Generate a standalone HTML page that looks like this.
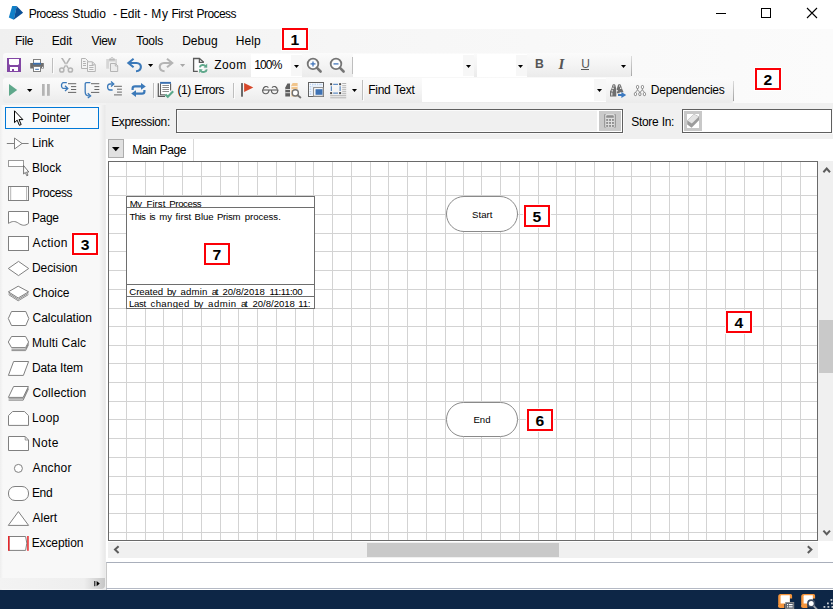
<!DOCTYPE html>
<html><head><meta charset="utf-8"><title>Process Studio - Edit - My First Process</title>
<style>
html,body{margin:0;padding:0;}
body{width:833px;height:609px;position:relative;overflow:hidden;background:#f0f0f0;font-family:"Liberation Sans",sans-serif;}
.a{position:absolute;box-sizing:border-box;}
.t{position:absolute;white-space:pre;line-height:1;}
svg{position:absolute;overflow:visible;}
.lab{position:absolute;box-sizing:border-box;border:2px solid #fb0007;background:#fff;font-weight:bold;color:#000;box-shadow:0 0 0 1px rgba(255,255,255,.85);}
</style></head><body>

<div class="a" style="left:0;top:0;width:833px;height:29px;background:#fff"></div>
<svg style="left:7px;top:5px" width="17" height="16" viewBox="0 0 17 16">
<polygon points="5.2,1 9.8,1.1 6.8,14.7 1.8,12.5" fill="#0f7fc8"/>
<polygon points="9.7,1.1 16.1,7.8 6.7,14.7" fill="#0b4f96"/>
</svg>
<span><span class="t" style="left:28.84px;top:8.00px;font-size:12px;letter-spacing:-0.612px;">Process</span> <span class="t" style="left:72.26px;top:8.00px;font-size:12px;letter-spacing:-0.080px;">Studio</span> <span class="t" style="left:112.99px;top:8.00px;font-size:12px;letter-spacing:0.000px;">-</span> <span class="t" style="left:119.94px;top:8.00px;font-size:12px;letter-spacing:-0.117px;">Edit</span> <span class="t" style="left:143.39px;top:8.00px;font-size:12px;letter-spacing:0.000px;">-</span> <span class="t" style="left:151.14px;top:8.00px;font-size:12px;letter-spacing:0.870px;">My</span> <span class="t" style="left:171.44px;top:8.00px;font-size:12px;letter-spacing:-0.423px;">First</span> <span class="t" style="left:196.54px;top:8.00px;font-size:12px;letter-spacing:-0.562px;">Process</span></span>
<svg style="left:0;top:0" width="833" height="29" viewBox="0 0 833 29" shape-rendering="crispEdges">
<rect x="716" y="13" width="10" height="1" fill="#000"/>
<rect x="761.5" y="8.5" width="9" height="9" fill="none" stroke="#000" stroke-width="1"/>
</svg>
<svg style="left:0;top:0" width="833" height="29" viewBox="0 0 833 29">
<path d="M807 8 L817 18 M817 8 L807 18" stroke="#000" stroke-width="1.1" fill="none"/>
</svg>
<div class="a" style="left:0;top:29px;width:833px;height:24px;background:linear-gradient(to right,#f0f0f0 0%,#f6f6f6 40%,#fbfbfb 100%)"></div>
<span class="t" style="left:15.04px;top:35.00px;font-size:12px;letter-spacing:-0.283px;">File</span>
<span class="t" style="left:51.74px;top:35.00px;font-size:12px;letter-spacing:-0.117px;">Edit</span>
<span class="t" style="left:91.57px;top:35.00px;font-size:12px;letter-spacing:-0.367px;">View</span>
<span class="t" style="left:136.16px;top:35.00px;font-size:12px;letter-spacing:-0.240px;">Tools</span>
<span class="t" style="left:182.14px;top:35.00px;font-size:12px;letter-spacing:0.068px;">Debug</span>
<span class="t" style="left:235.74px;top:35.00px;font-size:12px;letter-spacing:0.127px;">Help</span>
<div class="a" style="left:0;top:53px;width:833px;height:52px;background:linear-gradient(to right,#f0f0f0 0%,#f6f6f6 40%,#fbfbfb 100%)"></div>
<div class="a" style="left:3px;top:53px;width:629px;height:24px;border-radius:3px 3px 3px 3px;background:linear-gradient(to bottom,#fbfbfb 0%,#f4f4f4 50%,#ebebeb 100%)"></div>
<div class="a" style="left:3px;top:78px;width:731px;height:25px;border-radius:3px 3px 3px 3px;background:linear-gradient(to bottom,#fbfbfb 0%,#f4f4f4 50%,#ebebeb 100%)"></div>
<svg style="left:7px;top:58px" width="14" height="14" viewBox="0 0 14 14"><rect x="0" y="0" width="14" height="14" fill="#8246a4"/><path d="M2 1H12V6L11 7H3L2 6Z" fill="#fff"/><rect x="3" y="9" width="8" height="4" fill="#fff"/><rect x="5" y="11" width="2" height="2" fill="#8246a4"/></svg>
<svg style="left:30px;top:59px" width="14" height="13" viewBox="0 0 14 13"><rect x="3.5" y="0.5" width="7" height="5" fill="#fff" stroke="#808080" stroke-width="1"/>
<rect x="3" y="3.8" width="8" height="1.9" fill="#3a6fb0"/>
<path d="M0.2 4H3V5.8H11V4H13.8V9.6H11V7.5H3V9.6H0.2Z" fill="#6d6d6d"/>
<rect x="3.5" y="7.5" width="7" height="5" fill="#fff" stroke="#808080" stroke-width="1"/>
<rect x="5.2" y="9.8" width="3.7" height="1" fill="#3a6fb0"/>
<rect x="12" y="7.8" width="1.1" height="1.1" fill="#fff"/></svg>
<div class="a" style="left:52px;top:58px;width:1px;height:15px;background:#bebebe"></div><div class="a" style="left:53px;top:59px;width:1px;height:15px;background:#fcfcfc"></div>
<svg style="left:59px;top:58px" width="15" height="15" viewBox="0 0 15 15"><g fill="none" stroke="#b4b4b4" stroke-width="1.5"><circle cx="2.8" cy="12" r="2.1"/><circle cx="11.4" cy="12" r="2.1"/></g>
<path d="M1.9 0H3.9L9.9 9.9L8.6 10.6Z M12.1 0H10.1L4.1 9.9L5.4 10.6Z" fill="#b4b4b4"/></svg>
<svg style="left:81px;top:58px" width="15" height="14" viewBox="0 0 15 14"><g fill="#f4f4f4" stroke="#b4b4b4" stroke-width="1"><path d="M0.5 0.5H4.5L6.9 2.9V10.5H0.5Z"/><path d="M6.5 3.8H11.5L14.3 6.6V13.5H6.5Z"/></g>
<g stroke="#b4b4b4" stroke-width="1" fill="none"><path d="M2 3.5H4.5M2 5.5H5M2 7.5H5M8.2 7.5H12.5M8.2 9.5H12.5M8.2 11.5H12.5M11.3 4V6.8H14"/></g></svg>
<svg style="left:106px;top:57px" width="13" height="15" viewBox="0 0 13 15"><rect x="0.2" y="2" width="10.8" height="9.7" fill="#d6d6d6"/><rect x="3" y="4.6" width="6.4" height="7.1" fill="#efefef"/>
<path d="M3.2 3.4V1.6H4.6C4.6 -0.2 7.4 -0.2 7.4 1.6H8.8V3.4Z" fill="#b8b8b8"/><circle cx="6" cy="1.5" r="0.7" fill="#f0f0f0"/>
<path d="M4.5 6.5H9.5L11.7 8.7V14.5H4.5Z" fill="#ececec" stroke="#b4b4b4" stroke-width="1"/><path d="M9.3 6.8V9H11.5" fill="none" stroke="#b4b4b4" stroke-width="0.9"/></svg>
<svg style="left:127px;top:58px" width="15" height="14" viewBox="0 0 15 14"><path d="M6.6 0.8 L1.4 5 L6.6 9.2" fill="none" stroke="#3b79b9" stroke-width="2.1" stroke-linejoin="miter"/><path d="M2 5 H9.6 C15.4 5 15.4 12.8 9 13.2" fill="none" stroke="#3b79b9" stroke-width="2.1"/></svg>
<svg style="left:147.8px;top:64px" width="6" height="4" viewBox="0 0 6 4"><polygon points="0,0 5.2,0 2.6,3.1" fill="#000"/></svg>
<svg style="left:159px;top:58px" width="15" height="14" viewBox="0 0 15 14"><g transform="translate(14.6,0) scale(-1,1)"><path d="M6.6 0.8 L1.4 5 L6.6 9.2" fill="none" stroke="#b4b4b4" stroke-width="2.1" stroke-linejoin="miter"/><path d="M2 5 H9.6 C15.4 5 15.4 12.8 9 13.2" fill="none" stroke="#b4b4b4" stroke-width="2.1"/></g></svg>
<svg style="left:179.8px;top:64px" width="6" height="4" viewBox="0 0 6 4"><polygon points="0,0 5.2,0 2.6,3.1" fill="#a8a8a8"/></svg>
<svg style="left:193px;top:58px" width="15" height="15" viewBox="0 0 15 15"><path d="M0.6 0.5H6.4L10.7 4.3V13.3H0.6Z" fill="#fdfdfd"/><path d="M4.8 13.3H0.6V0.5H6.4L10.7 4.3" fill="none" stroke="#5a5a5a" stroke-width="1.3"/><path d="M6.4 0.6V4.3H10.8" fill="none" stroke="#5a5a5a" stroke-width="1.3"/>
<g fill="none" stroke="#5fa88b" stroke-width="1.9"><path d="M6.8 9.4C7.2 6.6 11 6.2 12.8 8.2"/><path d="M13.8 11.4C13.4 14.2 9.6 14.8 7.8 12.8"/></g>
<path d="M14.2 5.6V9.8L10.6 9.4Z M6.2 15V11L9.8 11.4Z" fill="#5fa88b"/></svg>
<span class="t" style="left:214.34px;top:59.00px;font-size:12px;letter-spacing:0.393px;">Zoom</span>
<div class="a" style="left:251px;top:54px;width:51px;height:23px;background:#fff"></div><div class="a" style="left:291px;top:55px;width:11px;height:21px;background:#f7f7f7"></div>
<span class="t" style="left:254.20px;top:59.00px;font-size:12px;letter-spacing:-0.857px;">100%</span>
<svg style="left:293.8px;top:65px" width="6" height="4" viewBox="0 0 6 4"><polygon points="0,0 5,0 2.5,2.9" fill="#000"/></svg>
<svg style="left:307.1px;top:57.5px" width="15" height="15" viewBox="0 0 15 15"><circle cx="6" cy="5.9" r="5.3" fill="#fdfdfd" stroke="#757575" stroke-width="1.8"/><path d="M10 9.9L13.6 13.5" stroke="#757575" stroke-width="2.6" fill="none" stroke-linecap="round"/><path d="M3.5 5.9H8.5" stroke="#3a70b8" stroke-width="1.25"/><path d="M6 3.4V8.4" stroke="#3a70b8" stroke-width="1.25"/></svg>
<svg style="left:330.1px;top:57.5px" width="15" height="15" viewBox="0 0 15 15"><circle cx="6" cy="5.9" r="5.3" fill="#fdfdfd" stroke="#757575" stroke-width="1.8"/><path d="M10 9.9L13.6 13.5" stroke="#757575" stroke-width="2.6" fill="none" stroke-linecap="round"/><path d="M3.5 5.9H8.5" stroke="#3a70b8" stroke-width="1.25"/></svg>
<div class="a" style="left:352px;top:57px;width:1px;height:17px;background:#bebebe"></div><div class="a" style="left:353px;top:58px;width:1px;height:17px;background:#fcfcfc"></div>
<div class="a" style="left:353px;top:54px;width:121px;height:23px;background:#fff"></div><div class="a" style="left:463px;top:55px;width:11px;height:21px;background:#f7f7f7"></div>
<svg style="left:466px;top:64.6px" width="6" height="4" viewBox="0 0 6 4"><polygon points="0,0 5,0 2.5,2.9" fill="#000"/></svg>
<div class="a" style="left:477px;top:54px;width:50px;height:23px;background:#fff"></div><div class="a" style="left:516px;top:55px;width:11px;height:21px;background:#f7f7f7"></div>
<svg style="left:518px;top:64.6px" width="6" height="4" viewBox="0 0 6 4"><polygon points="0,0 5,0 2.5,2.9" fill="#000"/></svg>
<span class="t" style="left:535.1px;top:58px;font-size:12.2px;font-weight:bold;color:#555;">B</span>
<span class="t" style="left:558.6px;top:56.6px;font-size:15px;font-weight:bold;font-style:italic;color:#555;font-family:'Liberation Serif',serif">I</span>
<span class="t" style="left:581.2px;top:57.6px;font-size:12px;color:#555;">U</span><div class="a" style="left:581px;top:69px;width:8px;height:1px;background:#555"></div>
<svg style="left:620.8px;top:64.6px" width="6" height="4" viewBox="0 0 6 4"><polygon points="0,0 5,0 2.5,2.9" fill="#000"/></svg>
<div class="a" style="left:631px;top:56px;width:1px;height:20px;background:linear-gradient(to bottom,#dcdcdc,#a8a8a8)"></div>
<svg style="left:9px;top:84px" width="9" height="12" viewBox="0 0 9 12"><polygon points="0,0 8.2,6 0,12" fill="#5fa88b"/></svg>
<svg style="left:26.7px;top:88.9px" width="6" height="4" viewBox="0 0 6 4"><polygon points="0,0 5.4,0 2.7,3.1" fill="#000"/></svg>
<svg style="left:42px;top:84px" width="8" height="12" viewBox="0 0 8 12"><rect x="0" y="0" width="2.7" height="11.8" fill="#b4b4b4"/><rect x="5" y="0" width="2.8" height="11.8" fill="#b4b4b4"/></svg>
<svg style="left:60px;top:81px" width="17" height="13" viewBox="0 0 17 13"><rect x="8" y="2.2" width="8.2" height="1" fill="#686868"/><rect x="11" y="5.1" width="5.199999999999999" height="1" fill="#686868"/><rect x="11" y="8" width="5.199999999999999" height="1" fill="#686868"/><rect x="8" y="10.9" width="8.2" height="1" fill="#686868"/><path d="M6.8 1.6H3.6C0.8 1.6 0.8 7.4 3.6 7.4H7" fill="none" stroke="#3b79b9" stroke-width="1.3"/><path d="M5 4.8L7.8 7.4L5 10" fill="none" stroke="#3b79b9" stroke-width="1.3"/></svg>
<svg style="left:84px;top:81px" width="16" height="17" viewBox="0 0 16 17"><rect x="7" y="2.2" width="8.3" height="1" fill="#686868"/><rect x="10.4" y="5.1" width="4.9" height="1" fill="#686868"/><rect x="10.4" y="8" width="4.9" height="1" fill="#686868"/><rect x="7" y="10.9" width="8.3" height="1" fill="#686868"/><path d="M6.4 1.6H2.6C1.6 1.6 1.2 2.2 1.2 3V11C1.2 14 3 15 5.6 15" fill="none" stroke="#3b79b9" stroke-width="1.3"/><path d="M3.8 12.2L6.6 15L3.8 17" fill="none" stroke="#3b79b9" stroke-width="1.3"/></svg>
<svg style="left:106px;top:81px" width="16" height="15" viewBox="0 0 16 15"><rect x="8" y="4.8" width="7.9" height="1" fill="#686868"/><rect x="11" y="7.7" width="4.9" height="1" fill="#686868"/><rect x="11" y="10.6" width="4.9" height="1" fill="#686868"/><rect x="8" y="13.4" width="7.9" height="1" fill="#686868"/><path d="M6.6 9H4C0.8 9 0.8 3 4 3H7" fill="none" stroke="#3b79b9" stroke-width="1.3"/><path d="M5 0.4L7.8 3L5 5.6" fill="none" stroke="#3b79b9" stroke-width="1.3"/></svg>
<svg style="left:130.6px;top:82.6px" width="15" height="14" viewBox="0 0 15 14"><g fill="none" stroke="#3b79b9" stroke-width="2.2"><path d="M1.6 7V5.6C1.6 4.2 2.6 3.4 4 3.4H11.6"/><path d="M13.4 7V8.4C13.4 9.8 12.4 10.6 11 10.6H3.4"/></g>
<path d="M10 0L14.8 3.4L10 6.8Z M5 7.2L0.2 10.6L5 14Z" fill="#3b79b9"/></svg>
<div class="a" style="left:153px;top:83px;width:1px;height:15px;background:#bebebe"></div><div class="a" style="left:154px;top:84px;width:1px;height:15px;background:#fcfcfc"></div>
<svg style="left:157px;top:81px" width="18" height="17" viewBox="0 0 18 17"><path d="M1.3 2.2V15.3H8" fill="none" stroke="#5a5a5a" stroke-width="1.2"/>
<path d="M3.6 2.5V13.7H8.4M13.6 2.5V9.6" fill="none" stroke="#5a5a5a" stroke-width="1.1"/>
<rect x="4.2" y="2.8" width="8.8" height="10.3" fill="#fff"/>
<rect x="3.1" y="0.9" width="10.9" height="1.9" fill="#3a6fb0"/>
<g fill="#8c8c8c"><rect x="5.4" y="4" width="6.6" height="1"/><rect x="5.4" y="6" width="6.6" height="1"/><rect x="5.4" y="8" width="6.6" height="1"/><rect x="5.4" y="10" width="6.6" height="1"/></g>
<path d="M8.4 13.4L10.8 15.8L16.2 10.2" fill="none" stroke="#5aa88a" stroke-width="2.1"/></svg>
<span class="t" style="left:177.58px;top:84.00px;font-size:12px;letter-spacing:-0.479px;word-spacing:0.479px;">(1) Errors</span>
<div class="a" style="left:233px;top:83px;width:1px;height:15px;background:#bebebe"></div><div class="a" style="left:234px;top:84px;width:1px;height:15px;background:#fcfcfc"></div>
<svg style="left:241px;top:83px" width="13" height="14" viewBox="0 0 13 14"><rect x="0" y="0.1" width="2" height="13.6" fill="#6a6a6a"/><polygon points="3.1,0 12.3,4.4 3.1,9" fill="#d6472a"/></svg>
<svg style="left:261px;top:85px" width="18" height="10" viewBox="0 0 18 10"><g fill="none" stroke="#606060" stroke-width="1.15"><path d="M1 5H17.4"/><path d="M1.6 5C1.6 10 8 10 8 5"/><path d="M10.4 5C10.4 10 16.8 10 16.8 5"/><path d="M2 4.6C2.5 1.5 5.5 0.5 7.4 2.6"/><path d="M16.4 4.6C15.9 1.5 12.9 0.5 11 2.6"/></g></svg>
<svg style="left:285px;top:83px" width="17" height="15" viewBox="0 0 17 15"><path d="M0.3 13.6V4.4L2.4 0.6H5V13.6Z" fill="#5e5e5e"/>
<path d="M6.4 13.6V2.2L7.6 0H12.6V13.6Z" fill="#f1c58c"/>
<g fill="#fff" opacity=".75"><rect x="0.3" y="6" width="4.7" height="1"/><rect x="0.3" y="9.2" width="4.7" height="1"/><rect x="6.4" y="3" width="6.2" height="1"/><rect x="6.4" y="6" width="6.2" height="1"/></g>
<circle cx="10.3" cy="9.9" r="3.1" fill="#fff" stroke="#737373" stroke-width="1.4"/><path d="M12.6 12.2L15.4 14.4" stroke="#737373" stroke-width="1.9" stroke-linecap="round"/></svg>
<svg style="left:308px;top:82px" width="16" height="15" viewBox="0 0 16 15"><rect x="0.5" y="0.5" width="15" height="14" fill="#fff" stroke="#626262" stroke-width="1"/>
<g fill="#bcd3f0"><rect x="1.6" y="1.6" width="1.6" height="1.6"/><rect x="4" y="1.6" width="1.6" height="1.6"/><rect x="6.4" y="1.6" width="1.6" height="1.6"/><rect x="8.8" y="1.6" width="1.6" height="1.6"/><rect x="11.2" y="1.6" width="1.6" height="1.6"/><rect x="13.2" y="1.6" width="1.2" height="1.6"/>
<rect x="1.6" y="4" width="1.6" height="1.6"/><rect x="1.6" y="6.4" width="1.6" height="1.6"/><rect x="1.6" y="8.8" width="1.6" height="1.6"/><rect x="1.6" y="11.2" width="1.6" height="1.6"/>
<rect x="3.6" y="3.6" width="1" height="10" opacity=".6"/><rect x="3.6" y="3.6" width="11" height="1" opacity=".6"/></g>
<rect x="5.6" y="5.6" width="9.6" height="8.6" fill="#fff" stroke="#8a8a8a" stroke-width="1"/>
<rect x="7.5" y="7.2" width="7" height="5.6" fill="#3e72b4"/></svg>
<svg style="left:330px;top:83px" width="17" height="16" viewBox="0 0 17 16"><g fill="#3c74b8"><rect x="3.2" y="0.8" width="4.8" height="1"/><rect x="3.2" y="9.6" width="4.8" height="1"/><rect x="0.8" y="3.2" width="1" height="4.8"/><rect x="9.6" y="3.2" width="1" height="4.8"/></g>
<g fill="#4a4a4a"><rect x="0.1" y="0.2" width="2" height="2"/><rect x="9.1" y="0.2" width="2" height="2"/><rect x="0.1" y="9.1" width="2" height="2"/><rect x="9.1" y="9.1" width="2" height="2"/></g>
<g fill="#b4b4b4"><rect x="12.2" y="0" width="4" height="1"/><rect x="12.2" y="2.2" width="4" height="1"/><rect x="12.2" y="4.2" width="4" height="1"/><rect x="12.2" y="6.2" width="4" height="1"/><rect x="12.2" y="8.2" width="4" height="1"/><rect x="12.2" y="10.2" width="4" height="1"/><rect x="0.2" y="12.2" width="16" height="1"/><rect x="0.2" y="14.3" width="16" height="1"/></g></svg>
<svg style="left:352px;top:89px" width="6" height="4" viewBox="0 0 6 4"><polygon points="0,0 5,0 2.5,2.9" fill="#000"/></svg>
<div class="a" style="left:362px;top:80px;width:1px;height:20px;background:#bebebe"></div><div class="a" style="left:363px;top:81px;width:1px;height:20px;background:#fcfcfc"></div>
<span class="t" style="left:368.24px;top:84.00px;font-size:12px;letter-spacing:-0.266px;word-spacing:0.266px;">Find Text</span>
<div class="a" style="left:422px;top:78px;width:184px;height:24px;background:#fff"></div><div class="a" style="left:594px;top:79px;width:12px;height:22px;background:#f7f7f7"></div>
<svg style="left:597.3px;top:88.8px" width="6" height="4" viewBox="0 0 6 4"><polygon points="0,0 5,0 2.5,2.9" fill="#000"/></svg>
<svg style="left:610px;top:84px" width="17" height="14" viewBox="0 0 17 14"><path d="M0 12.4V7.6L1.6 4.2L2.4 1.2C2.6 0 5.2 0 5.4 1.2L6.3 5V12.4Z" fill="#6e6e6e"/>
<path d="M6.9 9.2V4.6L7.9 1.2C8.1 0 10.7 0 10.9 1.2L12.4 5.4L13.6 8.2H9.6V9.2Z" fill="#6e6e6e"/>
<g fill="#fff" opacity=".85"><rect x="3.2" y="1.4" width="1.2" height="1.2"/><rect x="2.2" y="3.6" width="1.6" height="1.4"/><rect x="1.6" y="5.8" width="1.2" height="1.8"/><rect x="1.2" y="8.6" width="1.2" height="3"/><rect x="9" y="1.4" width="1.2" height="1.2"/><rect x="10" y="3.6" width="1.4" height="1.4"/><rect x="6.4" y="6" width="1.4" height="1.4"/></g>
<path d="M8 11H13" stroke="#3b79c0" stroke-width="2" fill="none"/><path d="M11.4 8L16.2 11L11.4 14Z" fill="#3b79c0"/></svg>
<svg style="left:634px;top:85px" width="12" height="11" viewBox="0 0 12 11"><g fill="#fff" stroke="#767676" stroke-width="0.9"><rect x="2.5" y="0.5" width="2.1" height="3" rx="0.9"/><rect x="7.4" y="0.5" width="2.1" height="3" rx="0.9"/>
<rect x="0.4" y="7.6" width="2.1" height="3" rx="0.9"/><rect x="4.8" y="7.6" width="2.1" height="3" rx="0.9"/><rect x="9.4" y="7.6" width="2.1" height="3" rx="0.9"/></g>
<path d="M3.5 3.6V4.8L1.5 7.4M3.6 4.8L5.8 7.4M8.4 3.6V4.8L10.4 7.4M8.4 4.8L6 7.4" fill="none" stroke="#767676" stroke-width="0.8"/></svg>
<span class="t" style="left:650.84px;top:84.00px;font-size:12px;letter-spacing:-0.251px;">Dependencies</span>
<div class="a" style="left:733px;top:81px;width:1px;height:20px;background:linear-gradient(to bottom,#dcdcdc,#a0a0a0)"></div>
<div class="a" style="left:106px;top:103px;width:727px;height:36px;background:#f0f0f0"></div>
<span class="t" style="left:111.14px;top:116.00px;font-size:12px;letter-spacing:-0.356px;">Expression:</span>
<div class="a" style="left:176px;top:109px;width:447px;height:24px;border:1px solid #5f5f5f;background:#f0f0f0;box-shadow:inset 0 0 0 1px #fbfbfb, 1px 1px 0 #fafafa"></div>
<span class="t" style="left:631.36px;top:116.00px;font-size:12px;letter-spacing:-0.334px;word-spacing:0.334px;">Store In:</span>
<div class="a" style="left:682px;top:109px;width:150px;height:24px;border:1px solid #5f5f5f;background:#fff;box-shadow:1px 1px 0 #fafafa"></div>
<div class="a" style="left:597px;top:110px;width:25px;height:22px;background:#fff"></div>
<div class="a" style="left:599px;top:111px;width:22px;height:20px;background:#cacaca"></div>
<svg style="left:604px;top:114px" width="12" height="14" viewBox="0 0 12 14">
<rect x="0.2" y="0" width="11.6" height="13.8" rx="1" fill="#8e8e8e"/>
<rect x="1.2" y="0" width="9.6" height="13.8" rx="1.4" fill="#dfdfdf"/>
<path d="M2.2 3.8V2.6C2.2 1.8 2.8 1.3 3.6 1.3H8.4C9.2 1.3 9.8 1.8 9.8 2.6V3.8Z" fill="#8e8e8e"/>
<g fill="#8e8e8e"><rect x="2.2" y="5" width="1.9" height="1.9"/><rect x="5.1" y="5" width="1.9" height="1.9"/><rect x="8" y="5" width="1.9" height="1.9"/>
<rect x="2.2" y="8" width="1.9" height="1.9"/><rect x="5.1" y="8" width="1.9" height="1.9"/><rect x="8" y="8" width="1.9" height="1.9"/>
<rect x="2.2" y="11" width="1.9" height="1.9"/><rect x="5.1" y="11" width="1.9" height="1.9"/><rect x="8" y="11" width="1.9" height="1.9"/></g></svg>
<div class="a" style="left:684px;top:111px;width:18px;height:20px;background:#c8c8c8"></div>
<div class="a" style="left:687px;top:114px;width:12px;height:14px;background:#fff"></div>
<svg style="left:687px;top:114px" width="12" height="14" viewBox="0 0 12 14">
<path d="M0.2 6.5L7 0.1L12 2.6V6.3L4.6 13.7L0.2 10.5Z" fill="#9c9c9c"/>
<path d="M0.4 6.5L7 0.3L11.8 2.7L4.8 9.4Z" fill="#e4e4e4"/>
</svg>
<div class="a" style="left:106px;top:139px;width:727px;height:424px;background:#fff"></div>
<div class="a" style="left:108px;top:139px;width:16px;height:19px;border:1px solid #adadad;background:#e1e1e1"></div>
<svg style="left:111.7px;top:147px" width="8" height="5" viewBox="0 0 8 5"><polygon points="0,0 7.6,0 3.8,4.2" fill="#000"/></svg>
<div class="a" style="left:124px;top:139px;width:70px;height:22px;border-right:1px solid #d9d9d9;background:#fff"></div>
<span class="t" style="left:132.14px;top:144.00px;font-size:12px;letter-spacing:-0.456px;word-spacing:0.456px;">Main Page</span>
<div class="a" style="left:108px;top:161px;width:710px;height:380px;background:#fff;border:1px solid #6a6a6a"></div>
<svg style="left:0;top:0" width="833" height="609" viewBox="0 0 833 609" shape-rendering="crispEdges"><rect x="126" y="162" width="1" height="378" fill="#d3d3d3"/><rect x="145" y="162" width="1" height="378" fill="#d3d3d3"/><rect x="163" y="162" width="1" height="378" fill="#d3d3d3"/><rect x="182" y="162" width="1" height="378" fill="#d3d3d3"/><rect x="201" y="162" width="1" height="378" fill="#d3d3d3"/><rect x="220" y="162" width="1" height="378" fill="#d3d3d3"/><rect x="238" y="162" width="1" height="378" fill="#d3d3d3"/><rect x="257" y="162" width="1" height="378" fill="#d3d3d3"/><rect x="276" y="162" width="1" height="378" fill="#d3d3d3"/><rect x="295" y="162" width="1" height="378" fill="#d3d3d3"/><rect x="313" y="162" width="1" height="378" fill="#d3d3d3"/><rect x="332" y="162" width="1" height="378" fill="#d3d3d3"/><rect x="351" y="162" width="1" height="378" fill="#d3d3d3"/><rect x="370" y="162" width="1" height="378" fill="#d3d3d3"/><rect x="388" y="162" width="1" height="378" fill="#d3d3d3"/><rect x="407" y="162" width="1" height="378" fill="#d3d3d3"/><rect x="426" y="162" width="1" height="378" fill="#d3d3d3"/><rect x="445" y="162" width="1" height="378" fill="#d3d3d3"/><rect x="463" y="162" width="1" height="378" fill="#d3d3d3"/><rect x="481" y="162" width="1" height="378" fill="#d3d3d3"/><rect x="500" y="162" width="1" height="378" fill="#d3d3d3"/><rect x="519" y="162" width="1" height="378" fill="#d3d3d3"/><rect x="538" y="162" width="1" height="378" fill="#d3d3d3"/><rect x="556" y="162" width="1" height="378" fill="#d3d3d3"/><rect x="575" y="162" width="1" height="378" fill="#d3d3d3"/><rect x="594" y="162" width="1" height="378" fill="#d3d3d3"/><rect x="613" y="162" width="1" height="378" fill="#d3d3d3"/><rect x="631" y="162" width="1" height="378" fill="#d3d3d3"/><rect x="650" y="162" width="1" height="378" fill="#d3d3d3"/><rect x="669" y="162" width="1" height="378" fill="#d3d3d3"/><rect x="688" y="162" width="1" height="378" fill="#d3d3d3"/><rect x="706" y="162" width="1" height="378" fill="#d3d3d3"/><rect x="725" y="162" width="1" height="378" fill="#d3d3d3"/><rect x="744" y="162" width="1" height="378" fill="#d3d3d3"/><rect x="763" y="162" width="1" height="378" fill="#d3d3d3"/><rect x="781" y="162" width="1" height="378" fill="#d3d3d3"/><rect x="800" y="162" width="1" height="378" fill="#d3d3d3"/><rect x="109" y="176" width="708" height="1" fill="#d3d3d3"/><rect x="109" y="195" width="708" height="1" fill="#d3d3d3"/><rect x="109" y="214" width="708" height="1" fill="#d3d3d3"/><rect x="109" y="233" width="708" height="1" fill="#d3d3d3"/><rect x="109" y="251" width="708" height="1" fill="#d3d3d3"/><rect x="109" y="270" width="708" height="1" fill="#d3d3d3"/><rect x="109" y="289" width="708" height="1" fill="#d3d3d3"/><rect x="109" y="308" width="708" height="1" fill="#d3d3d3"/><rect x="109" y="326" width="708" height="1" fill="#d3d3d3"/><rect x="109" y="345" width="708" height="1" fill="#d3d3d3"/><rect x="109" y="363" width="708" height="1" fill="#d3d3d3"/><rect x="109" y="382" width="708" height="1" fill="#d3d3d3"/><rect x="109" y="401" width="708" height="1" fill="#d3d3d3"/><rect x="109" y="419" width="708" height="1" fill="#d3d3d3"/><rect x="109" y="438" width="708" height="1" fill="#d3d3d3"/><rect x="109" y="457" width="708" height="1" fill="#d3d3d3"/><rect x="109" y="476" width="708" height="1" fill="#d3d3d3"/><rect x="109" y="494" width="708" height="1" fill="#d3d3d3"/><rect x="109" y="513" width="708" height="1" fill="#d3d3d3"/><rect x="109" y="532" width="708" height="1" fill="#d3d3d3"/></svg>
<div class="a" style="left:126px;top:196px;width:189px;height:113px;background:#fff;border:1px solid #6e6e6e;overflow:hidden">
<div class="a" style="left:0;top:0px;width:187px;height:10px;overflow:hidden"><span><span class="t" style="left:2.73px;top:2.00px;font-size:9.6px;letter-spacing:-0.524px;">My</span> <span class="t" style="left:19.53px;top:2.00px;font-size:9.6px;letter-spacing:0.042px;">First</span> <span class="t" style="left:42.33px;top:2.00px;font-size:9.6px;letter-spacing:-0.396px;">Process</span></span></div>
<div class="a" style="left:0;top:11px;width:187px;height:76px;overflow:hidden"><span><span class="t" style="left:2.61px;top:4.00px;font-size:9.6px;letter-spacing:-0.605px;">This</span> <span class="t" style="left:22.58px;top:4.00px;font-size:9.6px;letter-spacing:-0.976px;">is</span> <span class="t" style="left:32.18px;top:4.00px;font-size:9.6px;letter-spacing:0.032px;">my</span> <span class="t" style="left:48.48px;top:4.00px;font-size:9.6px;letter-spacing:0.078px;">first</span> <span class="t" style="left:67.53px;top:4.00px;font-size:9.6px;letter-spacing:-0.008px;">Blue</span> <span class="t" style="left:89.93px;top:4.00px;font-size:9.6px;letter-spacing:-0.209px;">Prism</span> <span class="t" style="left:117.70px;top:4.00px;font-size:9.6px;letter-spacing:-0.018px;">process.</span></span></div>
<div class="a" style="left:0;top:88px;width:187px;height:11px;overflow:hidden"><span><span class="t" style="left:2.32px;top:2.00px;font-size:9.6px;letter-spacing:-0.079px;">Created</span> <span class="t" style="left:40.10px;top:2.00px;font-size:9.6px;letter-spacing:-0.928px;">by</span> <span class="t" style="left:53.49px;top:2.00px;font-size:9.6px;letter-spacing:0.193px;">admin</span> <span class="t" style="left:84.69px;top:2.00px;font-size:9.6px;letter-spacing:-1.236px;">at</span> <span class="t" style="left:95.42px;top:2.00px;font-size:9.6px;letter-spacing:-0.029px;">20/8/2018</span> <span class="t" style="left:142.48px;top:2.00px;font-size:9.6px;letter-spacing:-0.407px;">11:11:00</span></span></div>
<div class="a" style="left:0;top:100px;width:187px;height:11px;overflow:hidden"><span><span class="t" style="left:2.03px;top:2.00px;font-size:9.6px;letter-spacing:-0.343px;">Last</span> <span class="t" style="left:23.49px;top:2.00px;font-size:9.6px;letter-spacing:0.349px;">changed</span> <span class="t" style="left:67.00px;top:2.00px;font-size:9.6px;letter-spacing:-0.928px;">by</span> <span class="t" style="left:81.09px;top:2.00px;font-size:9.6px;letter-spacing:0.493px;">admin</span> <span class="t" style="left:113.99px;top:2.00px;font-size:9.6px;letter-spacing:-1.336px;">at</span> <span class="t" style="left:125.52px;top:2.00px;font-size:9.6px;letter-spacing:-0.042px;">20/8/2018</span> <span class="t" style="left:171.28px;top:2.00px;font-size:9.6px;letter-spacing:-0.220px;">11:</span></span></div>
<div class="a" style="left:0;top:10px;width:187px;height:1px;background:#6e6e6e"></div>
<div class="a" style="left:0;top:87px;width:187px;height:1px;background:#6e6e6e"></div>
<div class="a" style="left:0;top:99px;width:187px;height:1px;background:#6e6e6e"></div>
</div>
<div class="a" style="left:446px;top:196px;width:72px;height:36px;border:1px solid #8a8a8a;border-radius:18px;background:#fff"></div>
<span class="t" style="left:472.07px;top:210.00px;font-size:9.6px;letter-spacing:0.050px;">Start</span>
<div class="a" style="left:446px;top:402px;width:72px;height:35px;border:1px solid #8a8a8a;border-radius:18px;background:#fff"></div>
<span class="t" style="left:473.43px;top:415.00px;font-size:9.6px;letter-spacing:0.002px;">End</span>
<div class="a" style="left:818px;top:161px;width:15px;height:380px;background:#f0f0f0"></div>
<div class="a" style="left:819px;top:320px;width:14px;height:53px;background:#c9c9c9"></div>
<div class="a" style="left:108px;top:542px;width:710px;height:16px;background:#f0f0f0"></div>
<div class="a" style="left:367px;top:543px;width:192px;height:14px;background:#c9c9c9"></div>
<svg style="left:0;top:0" width="833" height="609" viewBox="0 0 833 609">
<g stroke="#5c5c5c" stroke-width="2" fill="none">
<path d="M823.4 172.2 L826.7 168.6 L830 172.2"/>
<path d="M823.4 530.6 L826.7 534.2 L830 530.6"/>
<path d="M118.6 546.2 L115 549.6 L118.6 553"/>
<path d="M807.8 546.2 L811.4 549.6 L807.8 553"/>
</g></svg>
<div class="a" style="left:106px;top:562px;width:727px;height:28px;background:#fff;border-top:1px solid #a9afbb;border-left:1px solid #c8c8c8"></div><div class="a" style="left:106px;top:588px;width:727px;height:1px;background:#b4b9c4"></div>
<div class="a" style="left:0;top:105px;width:106px;height:485px;background:linear-gradient(to right,#eeeeee 0px,#f8f8f8 3px,#f8f8f8 99px,#e9e9e9 105px,#f0f0f0 106px)"></div>
<div class="a" style="left:0;top:578px;width:105px;height:11px;background:linear-gradient(to right,#f3f3f3 0%,#eeeeee 80%,#c6c6c6 100%);border-radius:0 0 4px 0"></div>
<svg style="left:94.2px;top:581px" width="7" height="6" viewBox="0 0 7 6"><rect x="0.3" y="0" width="1" height="5.2" fill="#000"/><polygon points="2.6,0 2.6,5.2 5.8,2.6" fill="#000"/></svg>
<div class="a" style="left:5px;top:107px;width:94px;height:22px;border:1px solid #0078d7;background:#f8fafc"></div>
<span class="t" style="left:31.94px;top:112.00px;font-size:12px;letter-spacing:0.022px;">Pointer</span>
<span class="t" style="left:31.94px;top:137.00px;font-size:12px;letter-spacing:-0.030px;">Link</span>
<span class="t" style="left:31.94px;top:162.00px;font-size:12px;letter-spacing:-0.027px;">Block</span>
<span class="t" style="left:31.94px;top:187.00px;font-size:12px;letter-spacing:-0.478px;">Process</span>
<span class="t" style="left:31.94px;top:212.00px;font-size:12px;letter-spacing:-0.350px;">Page</span>
<span class="t" style="left:32.60px;top:237.00px;font-size:12px;letter-spacing:0.284px;">Action</span>
<span class="t" style="left:31.94px;top:262.00px;font-size:12px;letter-spacing:-0.059px;">Decision</span>
<span class="t" style="left:32.50px;top:287.00px;font-size:12px;letter-spacing:-0.068px;">Choice</span>
<span class="t" style="left:32.50px;top:312.00px;font-size:12px;letter-spacing:0.008px;">Calculation</span>
<span class="t" style="left:31.94px;top:337.00px;font-size:12px;letter-spacing:0.185px;word-spacing:-0.185px;">Multi Calc</span>
<span class="t" style="left:31.94px;top:362.00px;font-size:12px;letter-spacing:-0.140px;word-spacing:0.140px;">Data Item</span>
<span class="t" style="left:32.50px;top:387.00px;font-size:12px;letter-spacing:0.119px;">Collection</span>
<span class="t" style="left:31.94px;top:412.00px;font-size:12px;letter-spacing:0.190px;">Loop</span>
<span class="t" style="left:31.94px;top:437.00px;font-size:12px;letter-spacing:0.417px;">Note</span>
<span class="t" style="left:32.60px;top:462.00px;font-size:12px;letter-spacing:0.154px;">Anchor</span>
<span class="t" style="left:31.94px;top:487.00px;font-size:12px;letter-spacing:-0.360px;">End</span>
<span class="t" style="left:32.60px;top:512.00px;font-size:12px;letter-spacing:-0.050px;">Alert</span>
<span class="t" style="left:31.74px;top:537.00px;font-size:12px;letter-spacing:-0.134px;">Exception</span>
<svg style="left:0;top:0" width="110" height="609" viewBox="0 0 110 609"><path d="M14.5 110.8V122.6L17.2 120.2L19.4 125.3L21.2 124.5L19 119.6H22.9Z" fill="#fff" stroke="#000" stroke-width="1" stroke-linejoin="miter"/><path d="M6.8 143.5H28.6" stroke="#808080" stroke-width="1" fill="none"/><path d="M14.5 138V149L22 143.5Z" fill="#fff" stroke="#808080" stroke-width="1"/><rect x="8.5" y="160.5" width="15" height="6" fill="#fff" stroke="#9a9a9a" stroke-width="1"/><path d="M23.6 165.6V174L25.3 172.4L26.8 175.8L28 175.2L26.6 172H28.8Z" fill="#fff" stroke="#555" stroke-width="0.8"/><rect x="8.5" y="186.5" width="20" height="14" fill="#fff" stroke="#808080" stroke-width="1"/><path d="M10.7 187V200M26.6 187V200" stroke="#b4b4b4" stroke-width="1" fill="none"/><path d="M8.5 223.4V211.5H28.5V223.4C25 226.2 22 225.6 18.5 223.2C15 220.8 12 221 8.5 223.4Z" fill="#fff" stroke="#808080" stroke-width="1"/><rect x="8.5" y="236.5" width="20" height="14" fill="#fff" stroke="#808080" stroke-width="1"/><path d="M8.3 268.5L18.5 261.4L28.7 268.5L18.5 275.6Z" fill="#fff" stroke="#808080" stroke-width="1"/><path d="M8.6 294.6L18.2 300.8L28.4 294.6M8.6 293.2L18.2 299.4L28.4 293.2" fill="none" stroke="#808080" stroke-width="0.9"/><path d="M8.4 291.8L18.2 286.2L28.6 291.8L18.2 298Z" fill="#fff" stroke="#808080" stroke-width="1"/><path d="M8.3 318.5L11.5 311.5H25.8L28.8 318.5L25.8 325.5H11.5Z" fill="#fff" stroke="#808080" stroke-width="1"/><path d="M11.5 350.6H25.6L28.6 344.6M11.5 349.2H25.6L28.6 343.4" fill="none" stroke="#808080" stroke-width="0.9"/><path d="M8.3 342L11.5 336.5H25.6L28.6 342L25.6 347.6H11.5Z" fill="#fff" stroke="#808080" stroke-width="1"/><path d="M13.6 361.5H28.6L23.4 375.4H8.4Z" fill="#fff" stroke="#808080" stroke-width="1"/><path d="M8.6 400.2H23.2L28.4 389M8.6 398.8H23.2L28.4 387.8" fill="none" stroke="#808080" stroke-width="0.9"/><path d="M13.6 386.5H28.4L23.2 397.4H8.4Z" fill="#fff" stroke="#808080" stroke-width="1"/><path d="M8.5 425.4V415.6L12.6 411.5H24.4L28.5 415.6V425.4Z" fill="#fff" stroke="#808080" stroke-width="1"/><path d="M8.5 436.5H25.2L28.5 440V450.5H8.5Z" fill="#fff" stroke="#808080" stroke-width="1"/><path d="M25.2 436.8V440H28.3" fill="none" stroke="#808080" stroke-width="0.8"/><circle cx="18.4" cy="468.4" r="4" fill="#fff" stroke="#808080" stroke-width="1" stroke-width="1.1"/><rect x="8.5" y="486.5" width="20" height="14" rx="6.5" fill="#fff" stroke="#808080" stroke-width="1"/><path d="M18.4 511.6L28.6 525.4H8.3Z" fill="#fff" stroke="#808080" stroke-width="1"/><path d="M9 536.5H25.6L26.8 543.2L25.6 550.4H9Z" fill="#fff" stroke="#808080" stroke-width="1"/><rect x="8" y="536" width="1.5" height="14.8" fill="#e8262a"/><rect x="27.2" y="536" width="1.5" height="14.8" fill="#e8262a"/></svg>
<div class="a" style="left:0;top:590px;width:833px;height:19px;background:#0d2646"></div>
<svg style="left:0;top:0" width="833" height="609" viewBox="0 0 833 609"><g transform="translate(778.2,594)">
<path d="M0 2.4C0 0.9 0.9 0 2.4 0H12.2C13.4 0 13.9 0.7 13.9 1.8V4.5H11.6V10H0Z" fill="#f5953c"/>
<path d="M-0.2 11.8C-0.2 10.4 0.6 9.6 2 9.6H6.2V14H2C0.6 14 -0.2 13.2 -0.2 11.8Z" fill="#f5953c"/>
<path d="M2.4 2.2C2.4 1.5 2.8 1.2 3.4 1.2H11.6V9.6H2.4Z" fill="#fff"/>
</g><g transform="translate(801.2,594)">
<path d="M0 2.4C0 0.9 0.9 0 2.4 0H12.2C13.4 0 13.9 0.7 13.9 1.8V4.5H11.6V10H0Z" fill="#f5953c"/>
<path d="M-0.2 11.8C-0.2 10.4 0.6 9.6 2 9.6H6.2V14H2C0.6 14 -0.2 13.2 -0.2 11.8Z" fill="#f5953c"/>
<path d="M2.4 2.2C2.4 1.5 2.8 1.2 3.4 1.2H11.6V9.6H2.4Z" fill="#fff"/>
</g><rect x="785.2" y="602" width="9" height="7" fill="#8c8c8c"/><rect x="786" y="603" width="7.4" height="5.4" fill="#5c6470"/><g fill="#fff"><rect x="787" y="604" width="1.2" height="1.2"/><rect x="789" y="604" width="3.6" height="1.2"/><rect x="787" y="606.2" width="1.2" height="1.2"/><rect x="789" y="606.2" width="3.6" height="1.2"/></g><circle cx="811.2" cy="603.4" r="3.3" fill="#fff" stroke="#3a4a62" stroke-width="1.6"/><path d="M813.6 606L817 609.4" stroke="#9aa0a8" stroke-width="1.8"/><rect x="830.5" y="599" width="1.8" height="1.8" fill="#c8ccd2" transform="rotate(0)"/><rect x="827" y="602.5" width="1.8" height="1.8" fill="#c8ccd2" transform="rotate(0)"/><rect x="831" y="602.5" width="1.8" height="1.8" fill="#c8ccd2" transform="rotate(0)"/><rect x="823.5" y="606" width="1.8" height="1.8" fill="#c8ccd2" transform="rotate(0)"/><rect x="827.5" y="606" width="1.8" height="1.8" fill="#c8ccd2" transform="rotate(0)"/><rect x="831.5" y="606" width="1.8" height="1.8" fill="#c8ccd2" transform="rotate(0)"/></svg>
<div class="lab" style="left:282px;top:28px;width:26px;height:22px;"><span style="position:absolute;left:-0.5px;top:3.2px;width:22px;text-align:center;font-size:14px;line-height:1;display:block;transform:scaleX(1.12)">1</span></div>
<div class="lab" style="left:755px;top:68px;width:26px;height:22px;"><span style="position:absolute;left:-0.5px;top:3.2px;width:22px;text-align:center;font-size:14px;line-height:1;display:block;transform:scaleX(1.12)">2</span></div>
<div class="lab" style="left:72px;top:233px;width:26px;height:22px;"><span style="position:absolute;left:-0.5px;top:3.2px;width:22px;text-align:center;font-size:14px;line-height:1;display:block;transform:scaleX(1.12)">3</span></div>
<div class="lab" style="left:726px;top:311px;width:26px;height:22px;"><span style="position:absolute;left:-0.5px;top:3.2px;width:22px;text-align:center;font-size:14px;line-height:1;display:block;transform:scaleX(1.12)">4</span></div>
<div class="lab" style="left:524px;top:205px;width:26px;height:22px;"><span style="position:absolute;left:-0.5px;top:3.2px;width:22px;text-align:center;font-size:14px;line-height:1;display:block;transform:scaleX(1.12)">5</span></div>
<div class="lab" style="left:527px;top:409px;width:26px;height:22px;"><span style="position:absolute;left:-0.5px;top:3.2px;width:22px;text-align:center;font-size:14px;line-height:1;display:block;transform:scaleX(1.12)">6</span></div>
<div class="lab" style="left:204px;top:243px;width:26px;height:22px;"><span style="position:absolute;left:-0.5px;top:3.2px;width:22px;text-align:center;font-size:14px;line-height:1;display:block;transform:scaleX(1.12)">7</span></div>
</body></html>
